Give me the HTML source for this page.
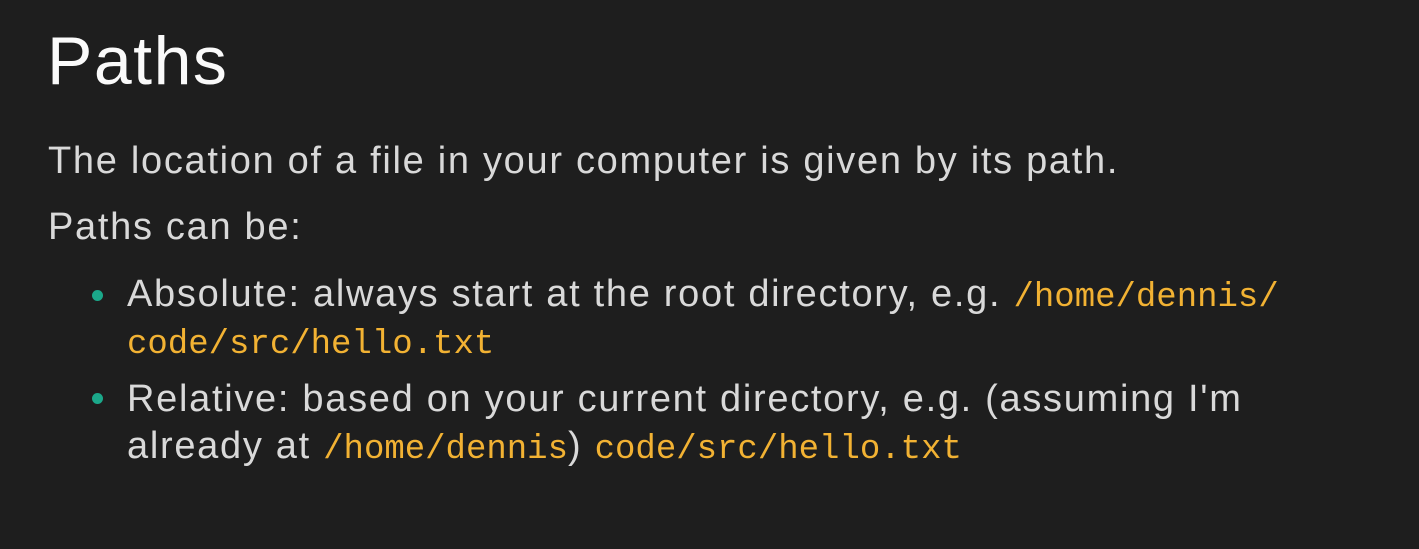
<!DOCTYPE html>
<html><head><meta charset="utf-8"><style>
html,body{margin:0;padding:0;}
body{width:1419px;height:549px;background:#1e1e1e;position:relative;overflow:hidden;font-family:"Liberation Sans",sans-serif;color:#d9d9d9;}
.l{position:absolute;white-space:nowrap;line-height:1;font-size:38px;letter-spacing:1.7px;}
.t{font-size:68px;color:#fafafa;left:47px;top:27px;letter-spacing:1.5px;}
code{font-family:"Liberation Mono",monospace;font-size:34px;color:#f2b233;letter-spacing:0;}
.dot{position:absolute;left:92px;width:11px;height:11px;border-radius:50%;background:#1ba88a;}
</style></head><body>
<div class="l t">Paths</div>
<div class="l" style="left:48px;top:142px;">The location of a file in your computer is given by its path.</div>
<div class="l" style="left:48px;top:208px;">Paths can be:</div>
<div class="dot" style="top:290px;"></div>
<div class="l" style="left:127px;top:275px;">Absolute: always start at the root directory, e.g. <code>/home/dennis/</code></div>
<div class="l" style="left:127px;top:322px;"><code>code/src/hello.txt</code></div>
<div class="dot" style="top:393px;"></div>
<div class="l" style="left:127px;top:380px;">Relative: based on your current directory, e.g. (assuming I'm</div>
<div class="l" style="left:127px;top:427px;">already at <code>/home/dennis</code>) <code>code/src/hello.txt</code></div>
</body></html>
